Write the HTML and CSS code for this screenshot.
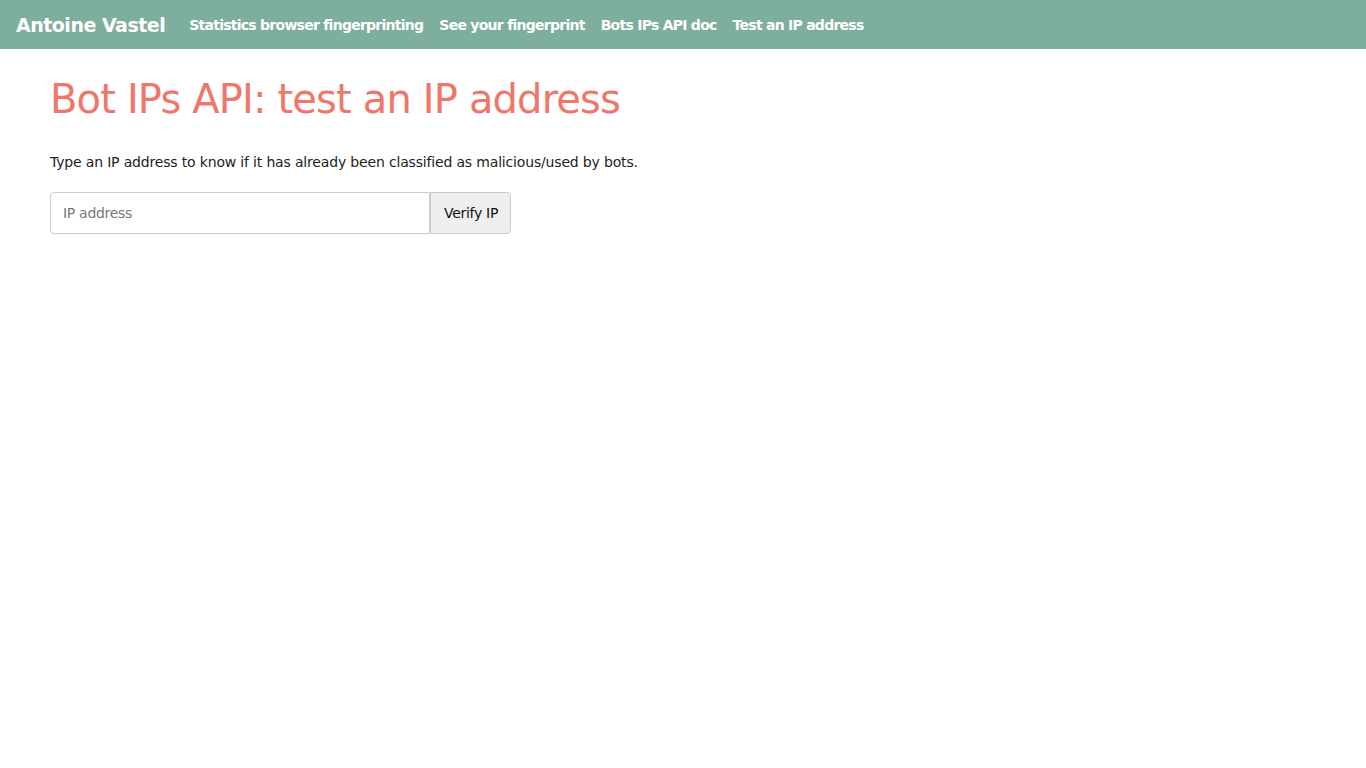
FILE: index.html
```html
<!DOCTYPE html>
<html>
<head>
<meta charset="utf-8">
<title>Bot IPs API: test an IP address</title>
<link rel="stylesheet" href="styles.css">
</head>
<body>
<nav class="navbar">
  <a class="brand" href="#">Antoine Vastel</a>
  <ul class="nav-links">
    <li><a href="#">Statistics browser fingerprinting</a></li>
    <li><a href="#">See your fingerprint</a></li>
    <li><a href="#">Bots IPs API doc</a></li>
    <li><a href="#">Test an IP address</a></li>
  </ul>
</nav>
<main class="container">
  <h1 class="title">Bot IPs API: test an IP address</h1>
  <p class="intro">Type an IP address to know if it has already been classified as malicious/used by bots.</p>
  <form class="ip-form">
    <input class="ip-input" type="text" placeholder="IP address">
    <button class="ip-button" type="button">Verify IP</button>
  </form>
</main>
</body>
</html>
```
FILE: styles.css
```css
html, body {
  margin: 0;
  padding: 0;
  background: #fff;
}
body {
  font-family: "DejaVu Sans", "Liberation Sans", sans-serif;
  color: #222;
}
.navbar {
  display: flex;
  align-items: center;
  height: 49px;
  background: #7daf9c;
  padding: 0 16px;
  box-sizing: border-box;
}
.brand {
  color: #fff;
  text-decoration: none;
  font-weight: bold;
  font-size: 19px;
  margin-right: 24px;
  letter-spacing: -0.5px;
}
.nav-links {
  display: flex;
  gap: 16px;
  list-style: none;
  margin: 0;
  padding: 0;
}
.nav-links a {
  color: #fff;
  text-decoration: none;
  font-weight: bold;
  font-size: 14px;
  letter-spacing: -0.74px;
}
.container {
  padding: 0 50px;
}
.title {
  margin: 26px 0 0;
  font-size: 40px;
  font-weight: normal;
  color: #f0766a;
  line-height: 48px;
  letter-spacing: -0.85px;
}
.intro {
  margin: 29px 0 0;
  font-size: 14px;
  line-height: 20px;
  letter-spacing: -0.17px;
}
.ip-form {
  display: flex;
  margin-top: 20px;
}
.ip-input {
  width: 380px;
  height: 42px;
  box-sizing: border-box;
  border: 1px solid #ccc;
  border-radius: 4px 0 0 4px;
  padding: 0 12px;
  font-family: inherit;
  font-size: 14px;
  letter-spacing: -0.3px;
  color: #222;
}
.ip-input::placeholder {
  color: #777;
}
.ip-button {
  height: 42px;
  box-sizing: border-box;
  border: 1px solid #ccc;
  border-radius: 0 4px 4px 0;
  background: #efefef;
  padding: 0 12px 0 13px;
  font-family: inherit;
  font-size: 14px;
  letter-spacing: -0.3px;
  color: #111;
}
```
